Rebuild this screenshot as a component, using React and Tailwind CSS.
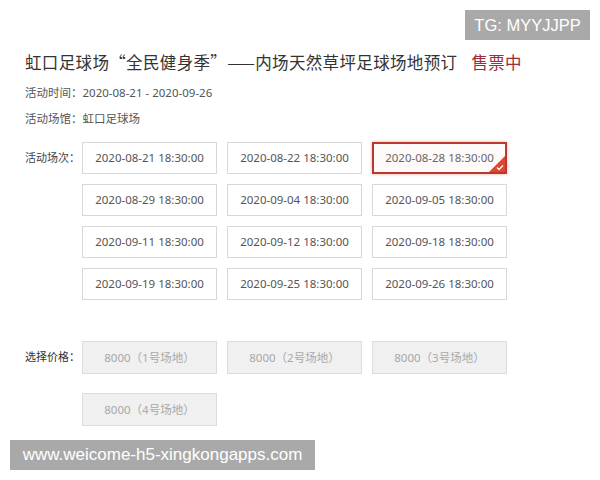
import React from "react";

const sessions = [
  "2020-08-21 18:30:00",
  "2020-08-22 18:30:00",
  "2020-08-28 18:30:00",
  "2020-08-29 18:30:00",
  "2020-09-04 18:30:00",
  "2020-09-05 18:30:00",
  "2020-09-11 18:30:00",
  "2020-09-12 18:30:00",
  "2020-09-18 18:30:00",
  "2020-09-19 18:30:00",
  "2020-09-25 18:30:00",
  "2020-09-26 18:30:00",
];

const prices = ["8000（1号场地）", "8000（2号场地）", "8000（3号场地）", "8000（4号场地）"];

export default function App() {
  const selected = 2;

  return (
    <div
      className="relative w-[600px] h-[480px] overflow-hidden bg-white text-[#333]"
      style={{ fontFamily: '"Noto Sans", "Noto Sans CJK SC", sans-serif' }}
    >
      {/* top-right watermark */}
      <div
        className="absolute top-[10px] left-[465px] w-[125px] h-[30px] bg-[#a9a9a9] text-white text-[16.5px] flex items-center justify-center"
        style={{ fontFamily: '"Liberation Sans", sans-serif' }}
      >
        TG: MYYJJPP
      </div>

      <div className="pl-[25px] pt-[50px]">
        {/* Title */}
        <h1
          className="text-[16.5px] leading-[24px] font-normal text-[#333] flex whitespace-nowrap tracking-[0.35px]"
          style={{ fontFamily: '"Noto Sans CJK SC", sans-serif' }}
        >
          <span>虹口足球场“全民健身季”——内场天然草坪足球场地预订</span>
          <span className="ml-[14px] text-[#9e2a3a]">售票中</span>
        </h1>

        <div className="mt-[9px] text-[11.5px] leading-[20px] text-[#555]">
          活动时间：2020-08-21 - 2020-09-26
        </div>
        <div className="mt-[6px] text-[11.5px] leading-[20px] text-[#555]">
          活动场馆：虹口足球场
        </div>

        {/* Sessions */}
        <div className="mt-[13px] flex items-start">
          <div className="w-[57px] shrink-0 whitespace-nowrap text-[11px] leading-[32px] text-[#444]">活动场次：</div>
          <div className="grid grid-cols-[135px_135px_135px] gap-x-[10px] gap-y-[10px]">
            {sessions.map((s, i) =>
              i === selected ? (
                <div
                  key={s}
                  className="relative h-[32px] border-2 border-[#b8392e] bg-[#fffafa] shadow-[0_0_3px_rgba(220,80,60,0.5)] flex items-center justify-center text-[11.5px] text-[#666] overflow-hidden"
                >
                  {s}
                  <svg
                    className="absolute right-0 bottom-0"
                    width="16"
                    height="16"
                    viewBox="0 0 16 16"
                  >
                    <polygon points="16,0 16,16 0,16" fill="#e0452f" />
                    <path d="M8 11.5 L10 13.5 L14 9.5" stroke="#fff" strokeWidth="1.3" fill="none" />
                  </svg>
                </div>
              ) : (
                <div
                  key={s}
                  className="h-[32px] border border-[#d8d8d8] bg-white flex items-center justify-center text-[11.5px] text-[#555]"
                >
                  {s}
                </div>
              )
            )}
          </div>
        </div>

        {/* Prices */}
        <div className="mt-[41px] flex items-start">
          <div className="w-[57px] shrink-0 whitespace-nowrap text-[11px] leading-[32px] text-[#333]">选择价格：</div>
          <div className="grid grid-cols-[135px_135px_135px] gap-x-[10px] gap-y-[19px]">
            {prices.map((p) => (
              <div
                key={p}
                className="h-[33px] border border-[#dcdcdc] bg-[#f0f0f0] flex items-center justify-center text-[11.5px] text-[#a8a8a8]"
              >
                {p}
              </div>
            ))}
          </div>
        </div>
      </div>

      {/* bottom watermark */}
      <div
        className="absolute left-[10px] top-[440px] w-[305px] h-[30px] bg-[#a9a9a9] text-white text-[17px] flex items-center justify-center"
        style={{ fontFamily: '"Liberation Sans", sans-serif' }}
      >
        www.weicome-h5-xingkongapps.com
      </div>
    </div>
  );
}
